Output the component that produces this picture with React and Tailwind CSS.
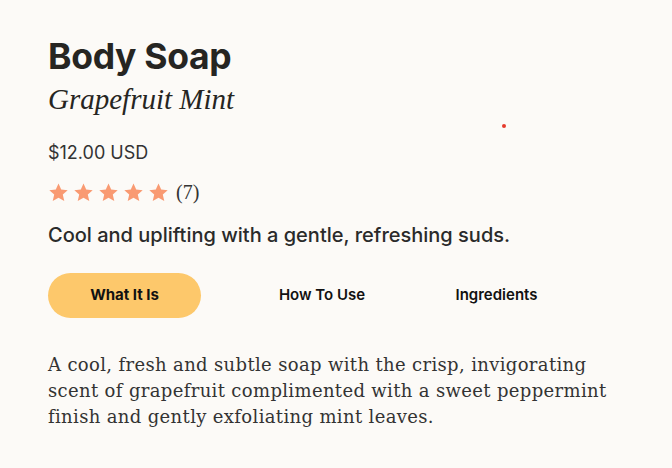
import React from "react";

const sans = { fontFamily: "Inter, 'Noto Sans', sans-serif" };

function Star() {
  return (
    <svg viewBox="0 0 24 24" className="w-[21px] h-[21px]" fill="#f99a72">
      <path d="M12 1.8l3.1 6.9 7.4.7-5.6 5 1.7 7.4L12 17.9l-6.6 3.9 1.7-7.4-5.6-5 7.4-.7z" />
    </svg>
  );
}

export default function App() {
  return (
    <div className="relative w-[672px] h-[468px] bg-[#fcfaf7] text-[#2b2b2b] overflow-hidden">
      {/* stray dot */}
      <div className="absolute left-[502px] top-[124px] w-[4px] h-[4px] rounded-full bg-[#e53a2c]" />

      <div className="pl-[48px] pt-[36px]">
        <h1 className="text-[35.5px] leading-[42px] font-bold tracking-[-0.3px] text-[#262522]" style={sans}>
          Body Soap
        </h1>
        <h2 className="mt-[3px] text-[29px] leading-[36px] italic font-['Liberation_Serif',serif] text-[#262522]">
          Grapefruit Mint
        </h2>

        <p className="mt-[24px] text-[18px] leading-[24px] text-[#333]" style={sans}>
          $12.00 USD
        </p>

        <div className="mt-[12px] flex items-center">
          <div className="flex gap-[4px]">
            <Star />
            <Star />
            <Star />
            <Star />
            <Star />
          </div>
          <span className="ml-[7px] text-[20px] font-['Liberation_Serif',serif] text-[#333]">(7)</span>
        </div>

        <p className="mt-[15px] text-[20px] leading-[26px] font-medium text-[#2a2a2a]" style={sans}>
          Cool and uplifting with a gentle, refreshing suds.
        </p>

        <div className="mt-[25px] flex items-center text-[15px] font-semibold text-[#111]" style={sans}>
          <button className="w-[153px] h-[45px] rounded-full bg-[#fdc86b] font-bold">What It Is</button>
          <button className="ml-[37px] w-[168px] h-[45px]">How To Use</button>
          <button className="ml-[7px] w-[167px] h-[45px]">Ingredients</button>
        </div>

        <p className="mt-[34px] w-[574px] text-[18px] leading-[26px] tracking-[0.35px] font-['DejaVu_Serif',serif] text-[#333]">
          A cool, fresh and subtle soap with the crisp, invigorating scent of grapefruit complimented with a sweet
          peppermint finish and gently exfoliating mint leaves.
        </p>
      </div>
    </div>
  );
}
